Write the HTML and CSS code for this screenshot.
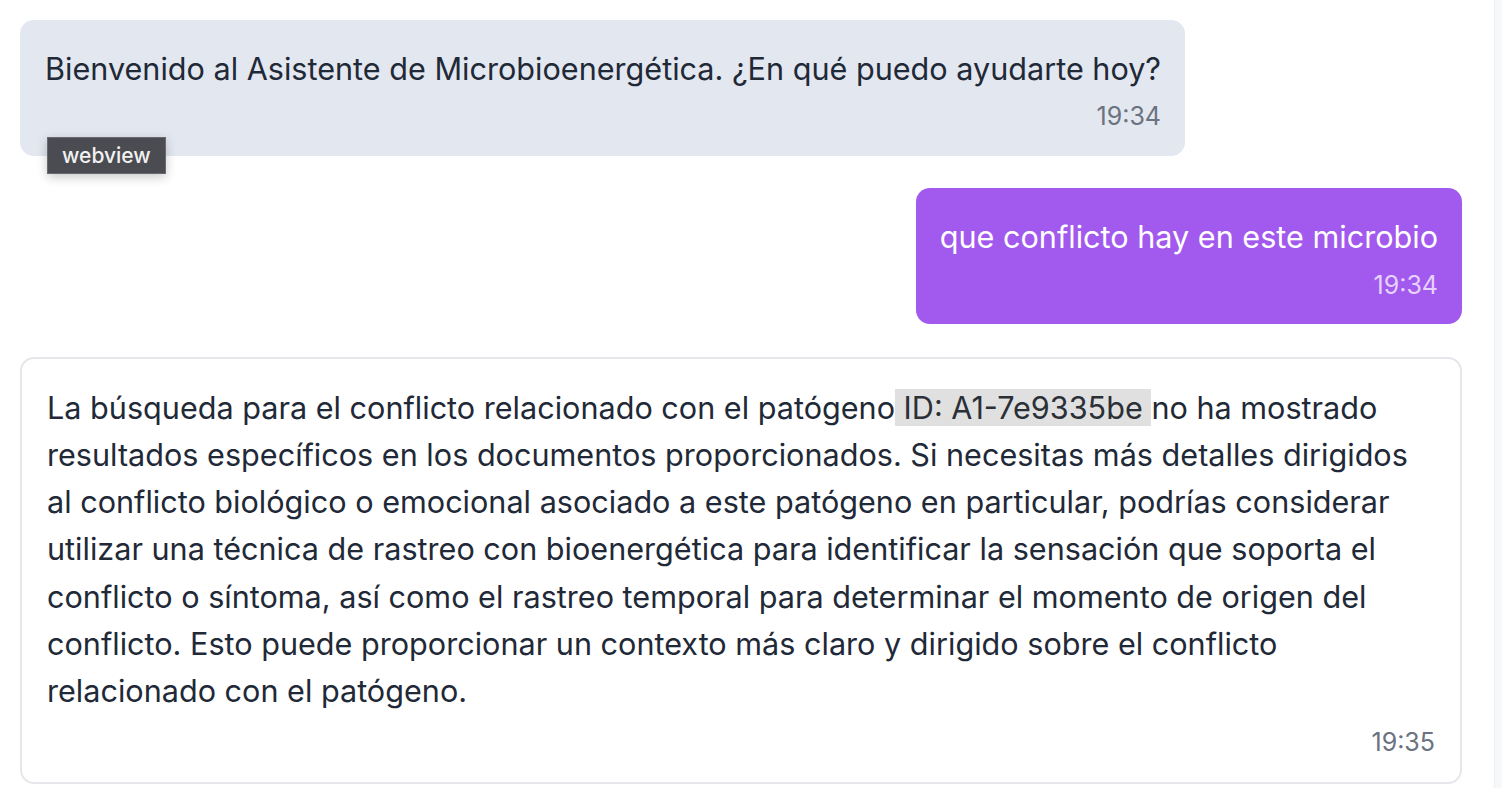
FILE: index.html
```html
<!DOCTYPE html>
<html lang="es">
<head>
<meta charset="utf-8">
<title>Asistente de Microbioenergética</title>
<link rel="stylesheet" href="styles.css">
</head>
<body>
<div class="app">
  <main class="chat">
    <div class="row row-left">
      <div class="bubble bubble-bot">
        <p class="msg">Bienvenido al Asistente de Microbioenergética. ¿En qué puedo ayudarte hoy?</p>
        <div class="time">19:34</div>
        <span class="tooltip">webview</span>
      </div>
    </div>
    <div class="row row-right">
      <div class="bubble bubble-user">
        <p class="msg">que conflicto hay en este microbio</p>
        <div class="time time-user">19:34</div>
      </div>
    </div>
    <div class="row row-left row-answer">
      <div class="bubble bubble-answer">
        <p class="msg">La búsqueda para el conflicto relacionado con el patógeno<span class="code"> ID: A1-7e9335be </span>no ha mostrado resultados específicos en los documentos proporcionados. Si necesitas más detalles dirigidos al conflicto biológico o emocional asociado a este patógeno en particular, podrías considerar utilizar una técnica de rastreo con bioenergética para identificar la sensación que soporta el conflicto o síntoma, así como el rastreo temporal para determinar el momento de origen del conflicto. Esto puede proporcionar un contexto más claro y dirigido sobre el conflicto relacionado con el patógeno.</p>
        <div class="time time-answer">19:35</div>
      </div>
    </div>
  </main>
  <div class="scrollbar"></div>
</div>
</body>
</html>
```
FILE: styles.css
```css
* { box-sizing: border-box; }
html, body { margin: 0; padding: 0; }
body {
  font-family: Inter, "Noto Sans", "Liberation Sans", sans-serif;
  color: #1f2937;
  background: #ffffff;
  height: 788px;
  overflow: hidden;
}
.app {
  display: flex;
  height: 788px;
}
.chat {
  flex: 1;
  padding: 20px 32px 0 20px;
  display: flex;
  flex-direction: column;
  gap: 32px;
}
.scrollbar {
  width: 8px;
  background: #f7f8fa;
  border-left: 1px solid #eeeff1;
}
.row { display: flex; }
.row-left { justify-content: flex-start; }
.row-right { justify-content: flex-end; }
.row-answer { margin-top: 1px; }
.bubble {
  position: relative;
  border-radius: 14px;
  padding: 25px 24px 25px 25px;
}
.msg {
  margin: 0;
  font-size: 30.6px;
  line-height: 47.3px;
}
.time {
  text-align: right;
  font-size: 25px;
  line-height: 30px;
  margin-top: 9px;
  color: #6b7280;
}
.bubble-bot {
  background: #e3e7ef;
}
.bubble-user {
  background: #a259ee;
  color: #ffffff;
  padding: 25px 24px 24px;
}
.time-user { color: #e6d2fc; }
.bubble-answer {
  width: 100%;
  background: #ffffff;
  border: 2px solid #e5e7eb;
  padding: 25px 25px 25px;
}
.time-answer { margin-top: 12px; }
.code {
  background: #e0e0e0;
  color: #2b2f36;
}
.tooltip {
  position: absolute;
  left: 27px;
  top: 117px;
  background: #4b4c51;
  border: 1px solid #6a6b70;
  color: #f2f2f2;
  font-size: 21px;
  font-weight: 500;
  line-height: 35px;
  padding: 0 14px;
  box-shadow: 0 3px 10px rgba(0, 0, 0, 0.22);
}
```
